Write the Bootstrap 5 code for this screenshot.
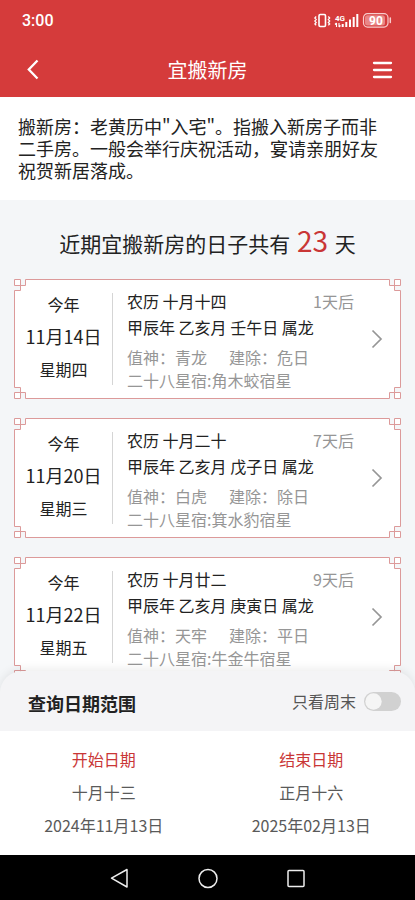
<!DOCTYPE html>
<html lang="zh-CN">
<head>
<meta charset="utf-8">
<meta name="viewport" content="width=device-width, initial-scale=1">
<title>宜搬新房</title>
<link href="https://cdn.jsdelivr.net/npm/bootstrap@5.3.0/dist/css/bootstrap.min.css" rel="stylesheet">
<style>
  body { font-family: "Noto Sans CJK SC", sans-serif; color: #222; background: #f4f6f8; font-size: 16px; }
  button, a { font: inherit; }
  svg { display: block; }
  .app { height: 100vh; }
  .app-top { background: #d53b3b; }
  .status-bar { height: 42px; padding: 0 23px 0 22px; font: 500 16px/42px Roboto, sans-serif; }
  .title-bar { height: 55px; padding: 0 16px; }
  .title-bar h1 { font-size: 20px; line-height: 55px; }
  .icon-btn { width: 32px; height: 32px; padding: 0; border: 0; background: none; color: inherit; }
  .app-body { min-height: 0; overflow-y: auto; scrollbar-width: none; }
  .app-body::-webkit-scrollbar { display: none; }
  .intro { padding: 18px 26px 19px 18px; font-size: 18px; line-height: 22px; }
  .summary { font-size: 21px; line-height: 40px; padding: 23px 0 16px; }
  .summary strong { color: #c93636; font-size: 28px; font-weight: 400; line-height: 1; margin: 0 2px; }
  .day-list { padding: 0 14px 40px; gap: 19px; }
  .day-item {
    height: 120px; color: inherit; text-decoration: none;
    border: 1px solid transparent;
    border-image: url("data:image/svg+xml,%3Csvg xmlns='http://www.w3.org/2000/svg' width='36' height='36'%3E%3Cpath d='M11.5 .5V6.5H.5V.5H6.5V11.5H.5V24.5H6.5V35.5H.5V29.5H11.5V35.5H24.5V29.5H35.5V35.5H29.5V24.5H35.5V11.5H29.5V.5H35.5V6.5H24.5V.5Z' fill='white' stroke='%23dc9a9a'/%3E%3C/svg%3E") 12 fill / 12px;
  }
  .day-date { width: 97px; line-height: 32px; padding-top: 8px; }
  .day-date b { font-weight: 400; font-size: 18px; }
  .day-rule { width: 1px; margin: 13px 0; background: #d5d5d5; }
  .day-info { padding: 8px 0 0 14px; line-height: 26px; }
  .day-wait, .day-stars { color: #969696; }
  .day-stars { line-height: 23px; margin-top: 6px; }
  .day-stars .pair { gap: 22px; }
  .day-go { width: 46px; color: #969696; }
  .sheet { position: relative; margin-top: -24px; border-radius: 22px 22px 0 0; background: #f4f4f6; box-shadow: 0 -2px 10px rgba(0,0,0,.08); }
  .sheet-head { height: 60px; padding: 0 14px 0 28px; }
  .sheet-head h2 { font-size: 18px; font-weight: 700; padding-top: 6px; }
  .sheet-head label { color: #555; }
  .weekend-switch.form-check-input { width: 37px; height: 19px; margin: 0; border: 0; background-color: #d1d1d1; background-size: 19px 19px;
    --bs-form-switch-bg: url("data:image/svg+xml,%3Csvg xmlns='http://www.w3.org/2000/svg' viewBox='0 0 19 19'%3E%3Ccircle cx='9.5' cy='9.5' r='8.2' fill='%23f5f5f5'/%3E%3C/svg%3E"); background-image: var(--bs-form-switch-bg); }
  .weekend-switch.form-check-input:checked { background-color: #d53b3b; }
  .range { padding: 12px 0 13px; }
  .range-btn { border: 0; background: none; padding: 0; color: #5a5a5a; line-height: 33px; }
  .range-btn .cap { color: #c93636; }
  .system-nav { height: 45px; gap: 64px; color: #eee; }
  .system-nav .icon-btn { width: 24px; height: 24px; }
</style>
<script src="https://cdn.jsdelivr.net/npm/bootstrap@5.3.0/dist/js/bootstrap.bundle.min.js"></script>
</head>
<body>
<div class="app d-flex flex-column">
  <header class="app-top text-white flex-shrink-0">
    <div class="status-bar d-flex justify-content-between align-items-center">
      <span>3:00</span>
      <svg width="78" height="18" viewBox="0 0 78 18" fill="none" stroke="#fff" aria-hidden="true">
        <rect x="5" y="2.500" width="6.500" height="12" rx="1.200" stroke-width="1.600"/>
        <path d="M2.200 4.500L.8 6l1.400 1.500L.8 9l1.400 1.500L.8 12l1.400 1.300M14.300 4.500l1.400 1.500-1.400 1.500 1.400 1.500-1.400 1.500 1.400 1.500-1.400 1.300" stroke-width="1.200"/>
        <text x="21" y="8.500" font-family="Roboto, sans-serif" font-size="8" font-weight="700" fill="#fff" stroke="none">4G</text>
        <path d="M22.500 15v-4M21 12.500l1.500-1.500M25 11v4M26.500 13.500L25 15" stroke-width="1.100"/>
        <path d="M28.700 15v-3M32.300 15v-5M36 15V7.500M39.700 15V5M43.300 15V2" stroke-width="2"/>
        <rect x="49.500" y="1.700" width="24.500" height="13.400" rx="4" stroke="#f8cccc" stroke-width="1.200"/>
        <rect x="51" y="3.200" width="20" height="10.400" rx="2.500" fill="#e98686" stroke="none"/>
        <path d="M76.300 6v4.500" stroke-width="1.500" stroke="#f8cccc" stroke-linecap="round"/>
        <text x="55" y="12.800" font-family="Roboto, sans-serif" font-size="12" font-weight="700" fill="#fff" stroke="none">90</text>
      </svg>
    </div>
    <div class="title-bar d-flex align-items-center justify-content-between">
      <button class="icon-btn" type="button" aria-label="返回">
        <svg width="32" height="32" fill="none" stroke="currentColor" stroke-width="2.300"><path d="M21.500 6.500L12.800 15.500L21.500 24.500"/></svg>
      </button>
      <h1 class="m-0 fw-normal">宜搬新房</h1>
      <button class="icon-btn" type="button" aria-label="菜单">
        <svg width="32" height="32" fill="none" stroke="currentColor" stroke-width="2.300" stroke-linecap="round"><path d="M7 9h17M7 16h17M7 23h17"/></svg>
      </button>
    </div>
  </header>

  <main class="app-body flex-grow-1">
    <p class="intro bg-white m-0">搬新房：老黄历中"入宅"。指搬入新房子而非二手房。一般会举行庆祝活动，宴请亲朋好友祝贺新居落成。</p>
    <p class="summary text-center m-0">近期宜搬新房的日子共有 <strong>23</strong> 天</p>
    <div class="day-list d-flex flex-column">
      <a class="day-item d-flex" href="#">
        <div class="day-date text-center"><div>今年</div><b>11月14日</b><div>星期四</div></div>
        <div class="day-rule"></div>
        <div class="day-info flex-grow-1">
          <div class="d-flex justify-content-between"><span>农历 十月十四</span><span class="day-wait">1天后</span></div>
          <div>甲辰年 乙亥月 壬午日 属龙</div>
          <div class="day-stars"><div class="pair d-flex"><span>值神：青龙</span><span>建除：危日</span></div>
          <div>二十八星宿:角木蛟宿星</div></div>
        </div>
        <div class="day-go d-flex align-items-center justify-content-center"><svg width="12" height="20" fill="none" stroke="currentColor" stroke-width="1.700"><path d="M1.500 1.500L10 10L1.500 18.500"/></svg></div>
      </a>
      <a class="day-item d-flex" href="#">
        <div class="day-date text-center"><div>今年</div><b>11月20日</b><div>星期三</div></div>
        <div class="day-rule"></div>
        <div class="day-info flex-grow-1">
          <div class="d-flex justify-content-between"><span>农历 十月二十</span><span class="day-wait">7天后</span></div>
          <div>甲辰年 乙亥月 戊子日 属龙</div>
          <div class="day-stars"><div class="pair d-flex"><span>值神：白虎</span><span>建除：除日</span></div>
          <div>二十八星宿:箕水豹宿星</div></div>
        </div>
        <div class="day-go d-flex align-items-center justify-content-center"><svg width="12" height="20" fill="none" stroke="currentColor" stroke-width="1.700"><path d="M1.500 1.500L10 10L1.500 18.500"/></svg></div>
      </a>
      <a class="day-item d-flex" href="#">
        <div class="day-date text-center"><div>今年</div><b>11月22日</b><div>星期五</div></div>
        <div class="day-rule"></div>
        <div class="day-info flex-grow-1">
          <div class="d-flex justify-content-between"><span>农历 十月廿二</span><span class="day-wait">9天后</span></div>
          <div>甲辰年 乙亥月 庚寅日 属龙</div>
          <div class="day-stars"><div class="pair d-flex"><span>值神：天牢</span><span>建除：平日</span></div>
          <div>二十八星宿:牛金牛宿星</div></div>
        </div>
        <div class="day-go d-flex align-items-center justify-content-center"><svg width="12" height="20" fill="none" stroke="currentColor" stroke-width="1.700"><path d="M1.500 1.500L10 10L1.500 18.500"/></svg></div>
      </a>
    </div>
  </main>

  <section class="sheet flex-shrink-0">
    <div class="sheet-head d-flex align-items-center justify-content-between">
      <h2 class="m-0">查询日期范围</h2>
      <div class="form-switch d-flex align-items-center gap-2 p-0">
        <label for="weekend">只看周末</label>
        <input class="form-check-input weekend-switch" type="checkbox" role="switch" id="weekend">
      </div>
    </div>
    <div class="range bg-white row g-0">
      <button class="range-btn col-6" type="button"><span class="cap d-block">开始日期</span><span class="d-block">十月十三</span><span class="d-block">2024年11月13日</span></button>
      <button class="range-btn col-6" type="button"><span class="cap d-block">结束日期</span><span class="d-block">正月十六</span><span class="d-block">2025年02月13日</span></button>
    </div>
  </section>

  <nav class="system-nav bg-black d-flex align-items-center justify-content-center flex-shrink-0" aria-label="系统导航">
    <button class="icon-btn" type="button" aria-label="后退"><svg width="24" height="24" fill="none" stroke="currentColor" stroke-width="1.500" stroke-linejoin="round"><path d="M19 3.500v17.500L3.500 12.200z"/></svg></button>
    <button class="icon-btn" type="button" aria-label="主页"><svg width="24" height="24" fill="none" stroke="currentColor" stroke-width="1.500"><circle cx="12" cy="12.500" r="9"/></svg></button>
    <button class="icon-btn" type="button" aria-label="最近任务"><svg width="24" height="24" fill="none" stroke="currentColor" stroke-width="1.500"><rect x="4" y="4.500" width="16" height="16" rx="1"/></svg></button>
  </nav>
</div>
</body>
</html>
